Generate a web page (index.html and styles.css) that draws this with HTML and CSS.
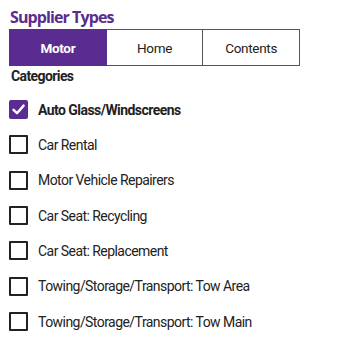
FILE: index.html
```html
<!DOCTYPE html>
<html>
<head>
<meta charset="utf-8">
<link rel="stylesheet" href="styles.css">
</head>
<body>
<div class="page">
  <h1 class="title">Supplier Types</h1>
  <div class="tabs">
    <div class="tab active">Motor</div>
    <div class="tab">Home</div>
    <div class="tab">Contents</div>
  </div>
  <div class="cats">Categories</div>
  <ul class="list">
    <li class="row checked"><span class="box"><svg viewBox="0 0 19 19" width="19" height="19"><path d="M4.5 9.8 L8 13.2 L14.6 5.6" fill="none" stroke="#fff" stroke-width="2.4" stroke-linecap="round" stroke-linejoin="round"/></svg></span><span class="label">Auto Glass/Windscreens</span></li>
    <li class="row"><span class="box"></span><span class="label">Car Rental</span></li>
    <li class="row"><span class="box"></span><span class="label">Motor Vehicle Repairers</span></li>
    <li class="row"><span class="box"></span><span class="label">Car Seat: Recycling</span></li>
    <li class="row"><span class="box"></span><span class="label">Car Seat: Replacement</span></li>
    <li class="row"><span class="box"></span><span class="label">Towing/Storage/Transport: Tow Area</span></li>
    <li class="row"><span class="box"></span><span class="label">Towing/Storage/Transport: Tow Main</span></li>
  </ul>
</div>
</body>
</html>
```
FILE: styles.css
```css
html, body { margin: 0; padding: 0; background: #fff; }
.page { padding: 7px 0 0 9px; font-family: Roboto, "Liberation Sans", sans-serif; color: #222; }
.title { margin: 0 0 2px 1px; font-family: "Open Sans", sans-serif; font-weight: 700; font-size: 16px; line-height: 20px; color: #5b2c8f; letter-spacing: -0.9px; }
.tabs { display: flex; width: 291px; height: 37px; }
.tab { flex: 1; display: flex; align-items: center; justify-content: center; border: 1px solid #555; border-left: none; font-size: 13.5px; color: #222; letter-spacing: -0.3px; }
.tab:first-child { border-left: 1px solid #555; }
.tab.active { background: #5b2c8f; border-color: #5b2c8f; color: #fff; font-weight: 700; }
.cats { margin: 2px 0 0 2px; font-weight: 700; font-size: 14px; line-height: 16px; color: #222; letter-spacing: -0.6px; }
.list { list-style: none; margin: 8px 0 0; padding: 0; }
.row { display: flex; align-items: center; height: 35.33px; }
.box { width: 19px; height: 19px; box-sizing: border-box; border: 2px solid #222; border-radius: 1px; flex: none; margin-right: 10px; }
.row.checked .box { border: none; background: #5b2c8f; border-radius: 2px; }
.box svg { display: block; }
.label { font-size: 14px; color: #222; letter-spacing: -0.55px; }
.row.checked .label { font-weight: 700; }
```
